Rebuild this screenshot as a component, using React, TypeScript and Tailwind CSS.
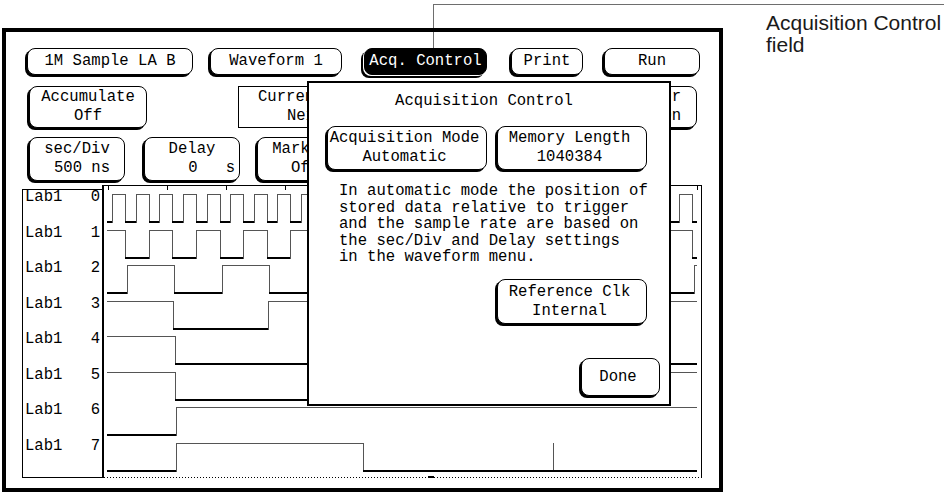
import type { ReactNode } from 'react';
import clsx from 'clsx';
import { twMerge } from 'tailwind-merge';

const mono = "font-['Liberation_Mono','DejaVu_Sans_Mono',monospace] text-[15.6px]";

function Key({ className, inv, children }: { className?: string; inv?: boolean; children: ReactNode }) {
  return (
    <div
      className={twMerge(
        clsx(
          'flex shrink-0 flex-col items-center justify-center rounded-[8px] border border-black leading-[19px] whitespace-pre',
          inv
            ? 'bg-black text-white shadow-[-1px_1px_0_0_#fff,-3px_3px_0_0_#000]'
            : 'bg-white shadow-[-2px_2px_0_0_#000]',
          className
        )
      )}
    >
      {children}
    </div>
  );
}

// waveform drawing, in page coordinates
const X0 = 107;
const X1 = 697;

const step = (from: number, p: number) => {
  const out: number[] = [];
  for (let x = from; x < X1; x += p) out.push(Math.round(x));
  return out;
};
const both = (a: number[], b: number[]) => [...a, ...b].sort((p, q) => p - q);

const rows: { hi0: boolean; edges: number[]; marks?: number[] }[] = [
  { hi0: false, edges: both(step(112, 23.625), step(125, 23.625)) },
  { hi0: true, edges: both(step(125, 47.25), step(148.625, 47.25)) },
  { hi0: false, edges: both(step(127, 94.5), step(174, 94.5)) },
  { hi0: true, edges: both(step(173, 189), step(268, 189)) },
  { hi0: true, edges: [175, 364, 553] },
  { hi0: true, edges: [175, 553] },
  { hi0: false, edges: [176] },
  { hi0: false, edges: [176, 363], marks: [553] },
];

function Waves() {
  const hiPath: string[] = [];
  const loPath: string[] = [];
  const vPath: string[] = [];
  rows.forEach((r, i) => {
    const hi = Math.round(194 + 35.5 * i);
    const lo = hi + 28;
    const xs = [X0, ...r.edges, X1];
    let high = r.hi0;
    for (let k = 0; k < xs.length - 1; k++) {
      if (high) hiPath.push(`M${xs[k]} ${hi + 0.5}H${xs[k + 1]}`);
      else loPath.push(`M${xs[k]} ${lo}H${xs[k + 1]}`);
      high = !high;
    }
    [...r.edges, ...(r.marks ?? [])].forEach((e) => vPath.push(`M${e + 0.5} ${hi}V${lo + 1}`));
  });
  const ticks = Array.from({ length: 11 }, (_, k) => Math.round(108 + 58.9 * k));
  return (
    <svg width={597} height={292} viewBox="104 186 597 292" className="block">
      <path d={hiPath.join('')} stroke="#555" strokeWidth={1} fill="none" />
      <path d={vPath.join('')} stroke="#555" strokeWidth={1} fill="none" />
      <path d={loPath.join('')} stroke="#000" strokeWidth={2} fill="none" />
      <path d={ticks.map((t) => `M${t + 0.5} 186V190`).join('')} stroke="#000" strokeWidth={1} />
      <path d="M104 477.5H699" stroke="#000" strokeWidth={1} strokeDasharray="1 2" />
      <path d="M428 477H434" stroke="#000" strokeWidth={2} />
    </svg>
  );
}

export default function App() {
  return (
    <div className={clsx('relative flex h-[494px] w-[948px] items-start overflow-hidden bg-white text-black', mono)}>
      {/* callout leader */}
      <div className="absolute left-[433px] top-[4px] h-[44px] w-[511px] border-l border-t border-[#6e6e6e]" />

      <div className="relative ml-[2px] mt-[28px] flex h-[464px] w-[721px] shrink-0 flex-col border-4 border-black">
        <div className="mt-[16px] flex h-[27px]">
          <Key className="ml-[21px] w-[166px]">1M Sample LA B</Key>
          <Key className="ml-[17px] w-[132px]">Waveform 1</Key>
          <Key inv className="ml-[22px] w-[123px]">Acq. Control</Key>
          <Key className="ml-[24px] w-[72px]">Print</Key>
          <Key className="ml-[21px] w-[96px]">Run</Key>
        </div>

        <div className="mt-[11px] flex h-[42px]">
          <Key className="ml-[23px] w-[118px]">
            <span>Accumulate</span>
            <span>Off</span>
          </Key>
          <div className="ml-[91px] flex w-[200px] shrink-0 flex-col justify-center border border-black leading-[19px] whitespace-pre">
            <span className="pl-[19px]">Current Sample</span>
            <span className="pl-[48px]">Next</span>
          </div>
          <Key className="ml-auto mr-[22px] w-[130px] items-end pr-[15px]">
            <span>Center</span>
            <span>Trigger On</span>
          </Key>
        </div>

        <div className="mt-[9px] flex h-[44px]">
          <Key className="ml-[23px] w-[96px]">
            <span>sec/Div</span>
            <span className="pl-[10px]">500 ns</span>
          </Key>
          <Key className="ml-[19px] w-[96px]">
            <span>Delay</span>
            <span className="self-end pr-[4px]">0   s</span>
          </Key>
          <Key className="ml-[17px] w-[96px]">
            <span>Markers</span>
            <span>Off</span>
          </Key>
        </div>

        <div className="mt-[4px] flex h-[293px] items-start">
          <div className="ml-[16px] mt-[4px] flex h-[289px] w-[80px] flex-col gap-[21.5px] border-y border-l border-black">
            {[0, 1, 2, 3, 4, 5, 6, 7].map((n) => (
              <div key={n} className="flex h-[14px] justify-between pl-[2px] pr-[2px] leading-[14px]">
                <span>Lab1</span>
                <span>{n}</span>
              </div>
            ))}
          </div>
          <div className="h-[293px] w-[600px] border-l-2 border-r border-t border-black">
            <Waves />
          </div>
        </div>

        {/* Acquisition Control pop-up */}
        <div className="absolute left-[301px] top-[49px] flex h-[325px] w-[364px] flex-col border-2 border-black bg-white">
          <div className="mt-[9px] h-[19px] pr-[10px] text-center leading-[19px]">Acquisition Control</div>
          <div className="mt-[15px] flex h-[44px]">
            <Key className="ml-[18px] w-[160px] pr-[5px]">
              <span>Acquisition Mode</span>
              <span>Automatic</span>
            </Key>
            <Key className="ml-[10px] w-[150px] pr-[5px]">
              <span>Memory Length</span>
              <span>1040384</span>
            </Key>
          </div>
          <div className="mt-[13px] pl-[30px] leading-[16.5px] whitespace-pre">
            <div>In automatic mode the position of</div>
            <div>stored data relative to trigger</div>
            <div>and the sample rate are based on</div>
            <div>the sec/Div and Delay settings</div>
            <div>in the waveform menu.</div>
          </div>
          <Key className="ml-[188px] mt-[13.5px] h-[45px] w-[150px] pr-[5px]">
            <span>Reference Clk</span>
            <span>Internal</span>
          </Key>
          <Key className="ml-[272px] mt-[34px] h-[38px] w-[79px] pr-[5px]">Done</Key>
        </div>
      </div>

      <div className="ml-[43px] mt-[12px] font-['Liberation_Sans',Arial,sans-serif] text-[21px] leading-[22px] text-[#1a1a1a]">
        <div>Acquisition Control</div>
        <div>field</div>
      </div>
    </div>
  );
}
